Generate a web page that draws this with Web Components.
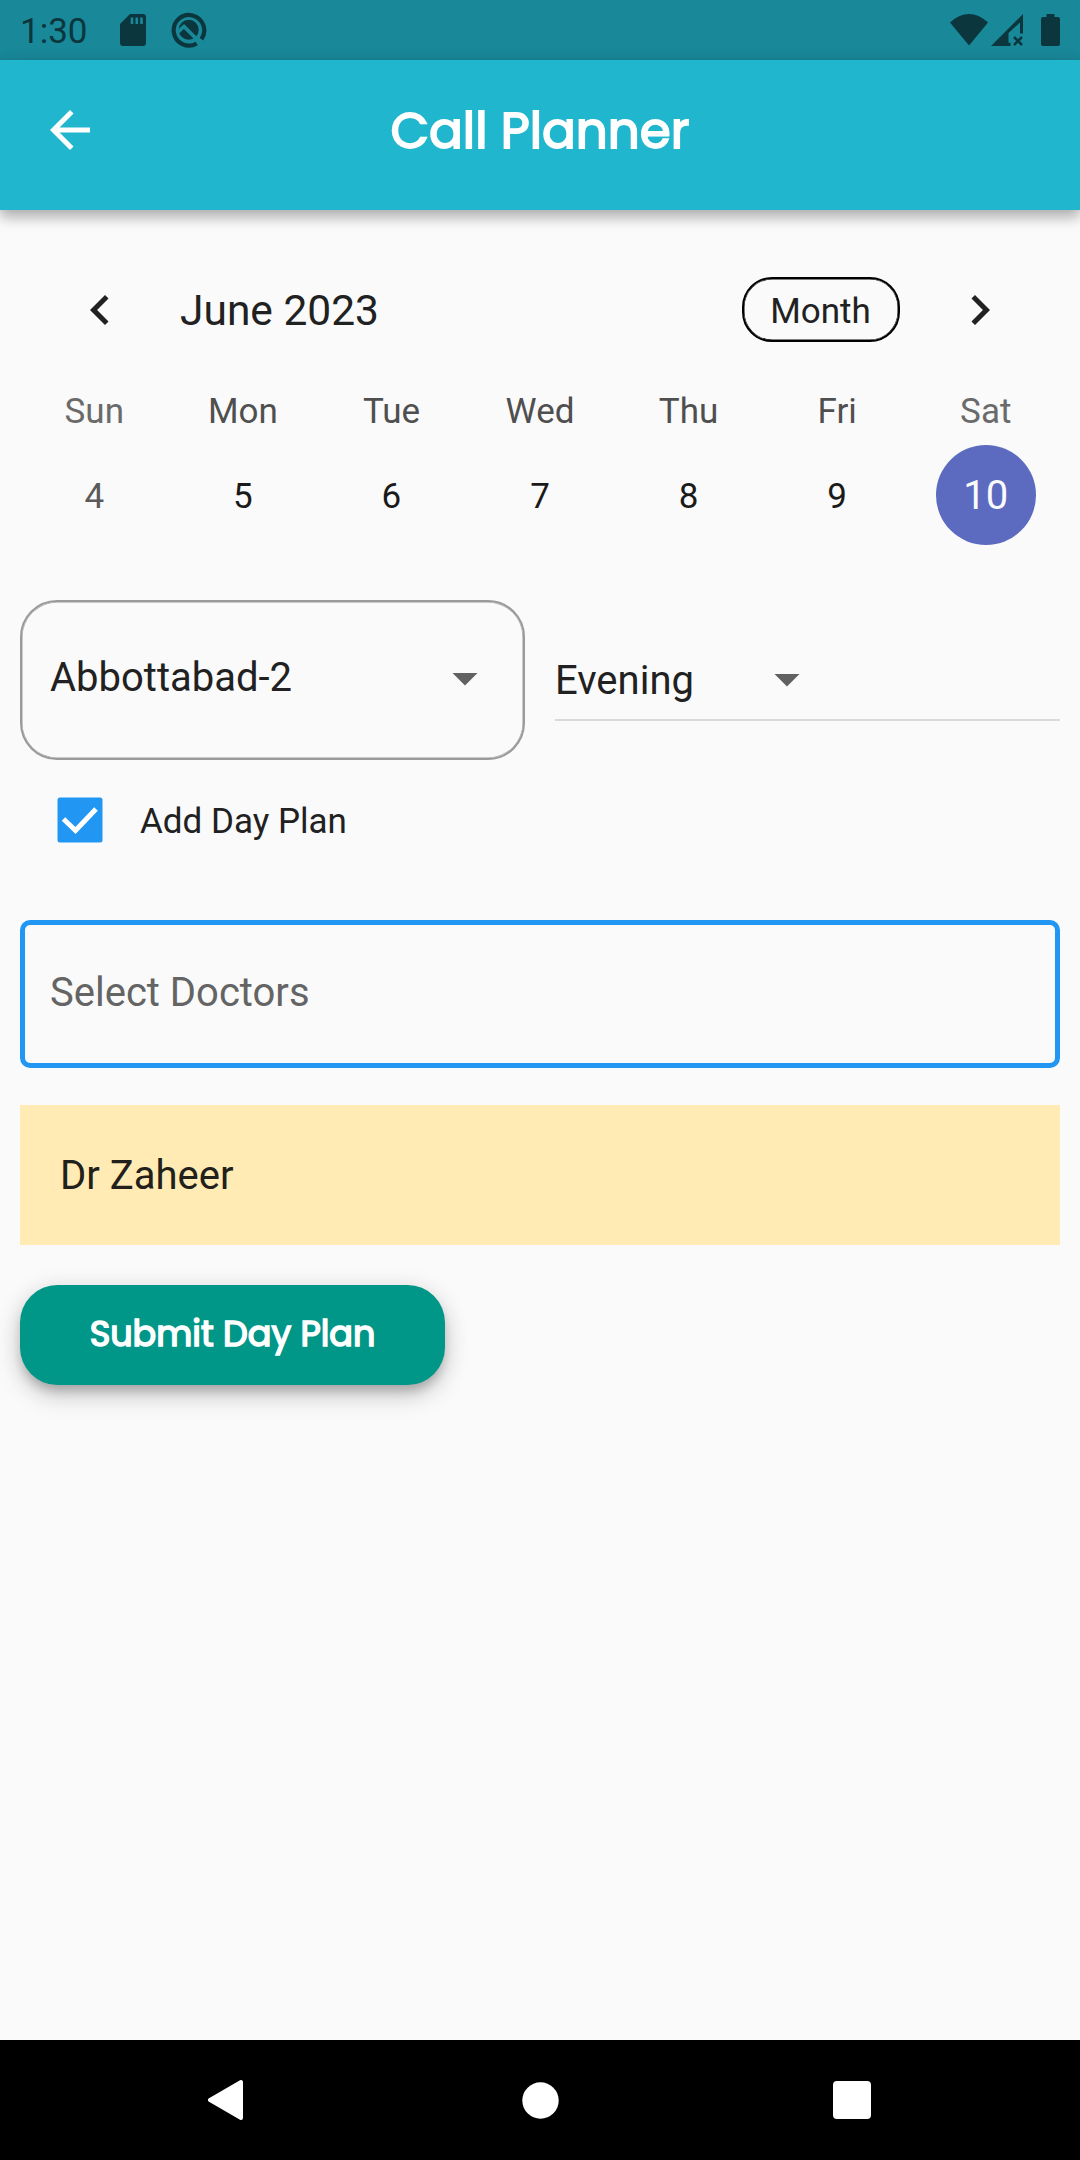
<!DOCTYPE html>
<html lang="en">
<head>
<meta charset="utf-8">
<title>Call Planner</title>
<style>
html,body{margin:0;padding:0}
body{width:1080px;height:2160px;overflow:hidden;background:#fafafa;font-family:Roboto,"Noto Sans",sans-serif;color:#212121}
</style>
</head>
<body>
<planner-screen></planner-screen>
<script>
const define = (name, html, after) => customElements.define(name, class extends HTMLElement {
  connectedCallback() {
    if (this.shadowRoot) return;
    const t = document.createElement('template');
    t.innerHTML = '<style>:host{display:block;box-sizing:border-box}*{box-sizing:border-box}svg{display:block;flex:none}</style>' + html;
    this.attachShadow({mode: 'open'}).append(t.content.cloneNode(true));
    if (after) after(this, this.shadowRoot);
  }
});

define('brand-text', `<style>
:host{white-space:nowrap;font-family:Poppins,Inter,"Open Sans",sans-serif;font-weight:400;color:#fff;-webkit-text-stroke:var(--weight,1.8px) #fff}
</style><slot></slot>`);

define('status-bar', `<style>
:host{height:60px;background:#198899;color:#0b363d}
.row{display:flex;align-items:center;height:60px;padding:0 20px 0 20px}
.time{font-size:35px;line-height:60px;width:100px;padding-top:3px}
.gap{flex:1}
</style>
<div class="row"><div class="time">1:30</div>
<svg width="26" height="32" viewBox="0 0 26 32"><path fill="currentColor" d="M10 0H23Q26 0 26 3V29Q26 32 23 32H3Q0 32 0 29V10Z"/><path stroke="#198899" stroke-width="2.6" d="M12 3.5V10M16.8 3.5V10M21.5 3.5V10"/></svg>
<svg style="margin-left:23.5px" width="38" height="38" viewBox="0 0 38 38"><path d="M26.5 32.3A15.3 15.3 0 1 1 31.2 28" transform="translate(.2 .2)" fill="none" stroke="currentColor" stroke-width="4.2"/><circle cx="18.7" cy="18.8" r="10" fill="currentColor"/><path d="M7.5 21.5L14 15.5L27 28.5" fill="none" stroke="#198899" stroke-width="3.6"/><path d="M27 28L32 33" stroke="#198899" stroke-width="4"/></svg>
<div class="gap"></div>
<svg width="38" height="32" viewBox="0 0 38 32"><path fill="currentColor" d="M0 8.4Q19 -8.4 38 8.4L19 31.6Z"/></svg>
<svg style="margin-left:3px" width="33" height="32" viewBox="0 0 33 32"><path fill="currentColor" d="M0 32L32 0V19.5H29V8.5L17.5 19V28.8H19.5V32Z"/><path stroke="currentColor" stroke-width="2.5" d="M23 23L31 31M31 23L23 31"/></svg>
<svg style="margin-left:17px" width="19" height="32" viewBox="0 0 19 32"><path fill="currentColor" d="M5.5 0H13.5V3H17Q19 3 19 5V30Q19 32 17 32H2Q0 32 0 30V5Q0 3 2 3H5.5Z"/></svg>
</div>`);

define('app-bar', `<style>
:host{height:150px;background:#20b6ce;box-shadow:0 5px 12px rgba(0,0,0,.17),0 10px 13px rgba(0,0,0,.12),0 2px 16px rgba(0,0,0,.08)}
.row{display:grid;grid-template-columns:1fr auto 1fr;align-items:center;height:150px;padding:0 40px}
brand-text{font-size:50px;line-height:60px;margin-top:-8px}
.back{margin-top:-10px}
</style><div class="row"><svg class="back" width="60" height="60" viewBox="0 0 24 24"><path fill="#fff" d="M20 11H7.83l5.59-5.59L12 4l-8 8 8 8 1.41-1.41L7.83 13H20z"/></svg>
<brand-text><slot></slot></brand-text></div>`);

define('day-column', `<style>
:host{flex:1 1 0;text-align:center;color:#1a1a1a}
.name{font-size:35px;line-height:42px;height:55px;color:#4f4f4f;padding-top:1px}
.num{font-size:35px;line-height:104px;width:100px;height:100px;margin:0 auto}
:host([weekend]) .name{color:#6a6a6a}
:host([weekend]) .num{color:#5a5a5a}
:host([selected]) .num{background:#5c6bc0;color:#fafafa;border-radius:50%;font-size:40px;line-height:102px}
</style><div class="name"></div><div class="num"><slot></slot></div>`, (el, root) => {
  root.querySelector('.name').textContent = el.getAttribute('name');
});

define('week-calendar', `<style>
:host{height:345px;padding:67px 20px 0}
.head{display:flex;align-items:center;height:65px;padding:0 50px}
.month{flex:1;font-size:42.5px;line-height:64px;padding:2px 0 0 50px}
.format{width:158px;height:65px;border:2px solid #000;box-shadow:inset 0 0 0 .5px #000;border-radius:30px;font-size:35px;line-height:62px;text-align:center;padding:2px 1px 0 0;margin-right:50px}
.days{display:flex;margin-top:48px}
</style>
<div class="head"><svg width="60" height="60" viewBox="0 0 24 24"><path fill="#212121" d="M15.41 7.41L14 6l-6 6 6 6 1.41-1.41L10.83 12z"/></svg>
<div class="month">June 2023</div><div class="format">Month</div>
<svg width="60" height="60" viewBox="0 0 24 24"><path fill="#212121" d="M10 6L8.59 7.41 13.17 12l-4.58 4.59L10 18l6-6z"/></svg></div>
<div class="days"><day-column name="Sun" weekend>4</day-column><day-column name="Mon">5</day-column><day-column name="Tue">6</day-column><day-column name="Wed">7</day-column><day-column name="Thu">8</day-column><day-column name="Fri">9</day-column><day-column name="Sat" weekend selected>10</day-column></div>`);

define('drop-down', `<style>
:host{display:flex;font-size:40px;width:505px}
:host([outlined]){height:160px;border:2px solid #9a9a9a;box-shadow:inset 0 0 0 .5px #9a9a9a;border-radius:37px;padding:46px 28px 0 28px}
:host([underlined]){height:121px;border-bottom:2px solid #dadada;padding-top:51px}
.label{width:385px;line-height:60px}
:host([underlined]) .label{width:202px}
:host([underlined]) svg{margin-top:-2px}
</style><div class="label"><slot></slot></div><svg width="60" height="60" viewBox="0 0 24 24"><path fill="#616161" d="M7 10l5 5 5-5z"/></svg>`);

define('check-row', `<style>
:host{display:flex;align-items:center;height:60px;padding-left:37px;font-size:35px}
span{line-height:60px;margin:3px 0 0 37px}
</style><svg width="46" height="46" viewBox="0 0 46 46"><rect x=".5" y=".5" width="45" height="45" rx="2.5" fill="#2196f3"/><path d="M6.5 22L18.5 33.5L39 12" fill="none" stroke="#fff" stroke-width="5"/></svg><span><slot></slot></span>`);

define('doctor-field', `<style>
:host{height:147.5px;border:5px solid #2196f3;border-radius:10px;padding:0 25px;font-size:40px;line-height:136px;color:#646464}
</style><slot></slot>`);

define('doctor-chip', `<style>
:host{height:140px;background:#ffebb3;padding:0 40px;font-size:40px;line-height:142px;color:#21201a}
</style><slot></slot>`);

define('submit-button', `<style>
:host{display:flex;align-items:center;justify-content:center;width:425px;height:100px;border-radius:37.5px;background:#009688;box-shadow:0 8px 10px -2px rgba(0,0,0,.18),0 12px 25px rgba(0,0,0,.15),0 3px 25px rgba(0,0,0,.1)}
brand-text{font-size:35px;line-height:60px;margin-top:-3px;--weight:1.6px}
</style><brand-text><slot></slot></brand-text>`);

define('nav-bar', `<style>
:host{height:120px;background:#000}
.row{height:120px;display:flex;align-items:center;justify-content:space-between;padding:0 209px 0 208px}
</style><div class="row">
<svg width="36" height="42" viewBox="0 0 36 42"><path d="M2 21L33 3V39Z" fill="#fff" stroke="#fff" stroke-width="4" stroke-linejoin="round"/></svg>
<svg style="margin-left:3px" width="37" height="37" viewBox="0 0 37 37"><circle cx="18.5" cy="18.5" r="18.2" fill="#fff"/></svg>
<svg width="38" height="38" viewBox="0 0 38 38"><rect width="38" height="38" rx="4" fill="#fff"/></svg></div>`);

define('planner-screen', `<style>
:host{display:flex;flex-direction:column;width:1080px;height:2160px;background:#fafafa}
main{flex:1}
.form{padding:45px 20px 0}
.pair{display:flex;gap:30px}
check-row{margin-top:30px}
doctor-field{margin-top:70px}
doctor-chip{margin-top:37.5px}
submit-button{margin-top:40px}
</style>
<status-bar></status-bar><app-bar>Call Planner</app-bar>
<main><week-calendar></week-calendar><div class="form">
<div class="pair"><drop-down outlined>Abbottabad-2</drop-down><drop-down underlined>Evening</drop-down></div>
<check-row>Add Day Plan</check-row>
<doctor-field>Select Doctors</doctor-field>
<doctor-chip>Dr Zaheer</doctor-chip>
<submit-button>Submit Day Plan</submit-button>
</div></main><nav-bar></nav-bar>`);
</script>
</body>
</html>
